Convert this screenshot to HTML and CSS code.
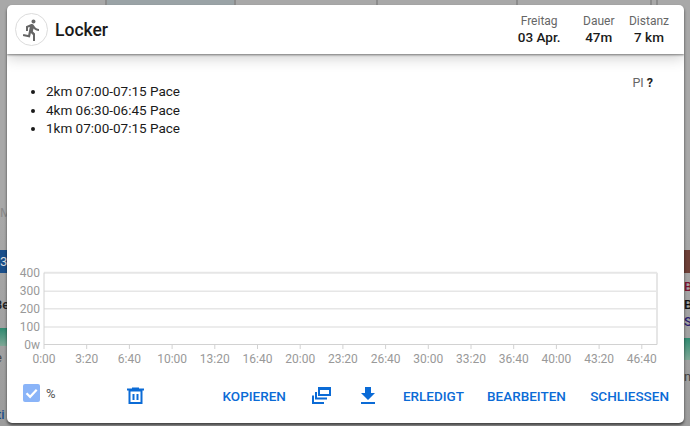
FILE: index.html
```html
<!DOCTYPE html>
<html lang="de">
<head>
<meta charset="utf-8">
<title>Locker</title>
<link rel="stylesheet" href="styles.css">
</head>
<body>
<div class="backdrop">
  <div class="cards">
    <div class="card card-a"></div>
    <div class="card card-b"></div>
    <div class="card card-c"></div>
    <div class="card card-d"></div>
    <div class="card card-e"></div>
    <div class="card card-f"></div>
  </div>
  <div class="sides">
    <div class="strip strip-left">
      <div class="bg-text bg-m">M</div>
      <div class="bg-band bg-blue">3</div>
      <div class="bg-text bg-be">Be</div>
      <div class="bg-band bg-green"></div>
      <div class="bg-text bg-e">e</div>
      <div class="bg-text bg-ti">ti</div>
    </div>
    <div class="strip strip-right">
      <div class="bg-band bg-red"></div>
      <div class="bg-text bg-r1">Be</div>
      <div class="bg-text bg-r2">B</div>
      <div class="bg-text bg-r3">S</div>
      <div class="bg-band bg-green"></div>
      <div class="bg-text bg-r4">n</div>
    </div>
  </div>
</div>
<main class="dialog">
  <header class="head">
    <div class="avatar">
      <svg class="run" viewBox="0 0 24 24"><path d="M13.49 5.48c1.1 0 2-.9 2-2s-.9-2-2-2-2 .9-2 2 .9 2 2 2zm-3.6 13.9l1-4.4 2.1 2v6h2v-7.5l-2.1-2 .6-3c1.3 1.5 3.3 2.5 5.5 2.5v-2c-1.9 0-3.5-1-4.3-2.4l-1-1.6c-.4-.6-1-1-1.7-1-.3 0-.5.1-.8.1l-5.2 2.2v4.7h2v-3.4l1.8-.7-1.6 8.1-4.9-1-.4 2 7 1.4z"/></svg>
    </div>
    <h1 class="title">Locker</h1>
    <div class="stats">
      <div class="stat stat-day"><div class="stat-label">Freitag</div><div class="stat-value">03 Apr.</div></div>
      <div class="stat stat-time"><div class="stat-label">Dauer</div><div class="stat-value">47m</div></div>
      <div class="stat"><div class="stat-label">Distanz</div><div class="stat-value">7 km</div></div>
    </div>
  </header>
  <section class="content">
    <ul class="steps">
      <li>2km 07:00-07:15 Pace</li>
      <li>4km 06:30-06:45 Pace</li>
      <li>1km 07:00-07:15 Pace</li>
    </ul>
    <div class="pi">PI <b>?</b></div>
  </section>
  <svg class="chart" viewBox="0 0 677 105" width="677" height="105">
    <g class="grid">
      <path class="frame" d="M37 7.7H650M650 7.7V79.5"/>
      <path d="M37 26.3H650M37 43.7H650M37 62H650"/>
      <path class="axis" d="M37 7.7V84M37 79.5H650M79.7 79.5V84M122.4 79.5V84M165.1 79.5V84M207.8 79.5V84M250.5 79.5V84M293.2 79.5V84M335.9 79.5V84M378.6 79.5V84M421.3 79.5V84M464 79.5V84M506.7 79.5V84M549.4 79.5V84M592.1 79.5V84M634.8 79.5V84"/>
    </g>
    <g class="ylabels">
      <text x="33" y="12">400</text>
      <text x="33" y="30">300</text>
      <text x="33" y="48">200</text>
      <text x="33" y="66">100</text>
      <text x="33" y="84">0w</text>
    </g>
    <g class="xlabels">
      <text x="37" y="98">0:00</text>
      <text x="79.7" y="98">3:20</text>
      <text x="122.4" y="98">6:40</text>
      <text x="165.1" y="98">10:00</text>
      <text x="207.8" y="98">13:20</text>
      <text x="250.5" y="98">16:40</text>
      <text x="293.2" y="98">20:00</text>
      <text x="335.9" y="98">23:20</text>
      <text x="378.6" y="98">26:40</text>
      <text x="421.3" y="98">30:00</text>
      <text x="464" y="98">33:20</text>
      <text x="506.7" y="98">36:40</text>
      <text x="549.4" y="98">40:00</text>
      <text x="592.1" y="98">43:20</text>
      <text x="634.8" y="98">46:40</text>
    </g>
  </svg>
  <footer class="actions">
    <div class="check">
      <svg viewBox="0 0 17 18" width="17" height="18"><path d="M3.5 9.2l3.6 3.6 6.6-7" /></svg>
    </div>
    <span class="pct">%</span>
    <svg class="icon trash" viewBox="0 0 17 17" width="17" height="17"><path class="ln" d="M2.5 3.500H14.500V16H2.500ZM6.500 7V13M10.500 7V13"/><path class="fl" d="M0 1.500H5V0.500H12V1.500H17V3.500H0Z"/></svg>
    <span class="btn btn-kopieren">Kopieren</span>
    <svg class="icon copy" viewBox="0 0 19 17" width="19" height="17"><path class="ln" d="M7 1.500H18V8H7Z"/><path class="fl" d="M6 0H19V3H6Z"/><path class="ln" d="M4 5V11.500H15M1 8.500V16H12"/></svg>
    <svg class="icon down" viewBox="0 0 14 17" width="14" height="17"><path class="fl" d="M4 0H10V6H14L7 13L0 6H4ZM0 15H14V17H0Z"/></svg>
    <span class="btn btn-erledigt">Erledigt</span>
    <span class="btn btn-bearbeiten">Bearbeiten</span>
    <span class="btn btn-schliessen">Schliessen</span>
  </footer>
</main>
</body>
</html>
```
FILE: styles.css
```css
* { box-sizing: border-box; }
html, body { margin: 0; height: 100%; }
body {
  width: 690px;
  height: 426px;
  overflow: hidden;
  position: relative;
  background: #a6a6a6;
  font-family: Roboto, "Liberation Sans", sans-serif;
}
.backdrop {
  display: flex;
  flex-direction: column;
  height: 426px;
  background: linear-gradient(#a8a8a8, #a8a8a8 50%, #9c9c9c);
}
.cards { display: flex; flex: none; height: 5px; }
.card { flex: none; height: 5px; border-right: 2px solid #8c8c8c; }
.card-a { width: 107px; }
.card-b { width: 129px; background: #9aa3a6; }
.card-c { width: 142px; }
.card-d { width: 140px; }
.card-e { width: 134px; }
.card-f { width: 6px; }
.sides { flex: 1; display: flex; justify-content: space-between; min-height: 0; }
.strip { width: 7px; overflow: hidden; padding-top: 200px; font-size: 13px; line-height: 16px; }
.strip-right { width: 6px; }
.bg-text { font-weight: 500; color: #222; white-space: nowrap; }
.bg-band { color: #ddd; line-height: 23px; }
.bg-blue { height: 23px; margin-top: 29px; background: #1b4f8a; }
.bg-red { height: 23px; margin-top: 45px; background: #6e4038; }
.bg-green { height: 18px; background: linear-gradient(#2f8a70, #7fa796); }
.bg-m { color: #8a8a8a; font-weight: 400; }
.bg-be { margin-top: 24px; margin-left: -6px; }
.strip-left .bg-green { margin-top: 15px; }
.bg-e { margin-top: 4px; margin-left: -5px; color: #444; font-weight: 400; }
.bg-ti { margin-top: 41px; color: #1b4f8a; margin-left: -3px; }
.bg-r1 { margin-top: 6px; color: #7a1530; }
.bg-r2 { margin-top: 2px; color: #111; }
.bg-r3 { margin-top: 1px; color: #2a1a6e; }
.strip-right .bg-green { height: 22px; margin-top: 8px; }
.bg-r4 { margin-top: 9px; color: #444; font-weight: 400; }

.dialog {
  position: absolute;
  left: 7px;
  top: 5px;
  width: 677px;
  height: 418px;
  display: flex;
  flex-direction: column;
  background: #fff;
  border-radius: 5px;
  overflow: hidden;
  box-shadow: 0 2px 3px rgba(0, 0, 0, .6);
}
.head {
  display: flex;
  align-items: center;
  height: 49px;
  flex: none;
  padding: 0 15px 0 8px;
  position: relative;
  box-shadow: 0 1px 2px rgba(0, 0, 0, .45), 0 3px 14px rgba(0, 0, 0, .22);
}
.avatar {
  width: 33px;
  height: 33px;
  border: 1px solid #dcdcdc;
  border-radius: 50%;
  display: flex;
  align-items: center;
  justify-content: center;
}
.run { width: 24px; height: 24px; fill: #666; }
.title {
  margin: 0 0 0 7px;
  font-size: 17.500px;
  font-weight: 500;
  color: #1a1a1a;
}
.stats { margin-left: auto; display: flex; }
.stat { text-align: center; }
.stat-day { margin-right: 22.500px; }
.stat-time { margin-right: 14.500px; }
.stat-label { font-size: 12px; line-height: 16px; color: #666; }
.stat-value { font-size: 13.500px; line-height: 17px; font-weight: 500; color: #1a1a1a; }

.content { flex: 1; display: flex; justify-content: space-between; min-height: 0; }
.steps {
  margin: 28px 0 0;
  padding: 0 0 0 39px;
  font-size: 13.500px;
  line-height: 18.500px;
  color: #1a1a1a;
}
.pi { margin: 21px 31px 0 0; font-size: 12.500px; line-height: 16px; color: #666; }
.pi b { color: #222; font-weight: 700; }

.chart { flex: none; display: block; }
.grid path { fill: none; stroke: #e6e6e6; stroke-width: 1.400; }
.grid .axis { stroke: #d2d2d2; stroke-width: 1; }
.grid .frame { stroke-width: 2; stroke: #e6e6e6; }
.ylabels text { font-size: 12px; fill: #999; text-anchor: end; }
.xlabels text { font-size: 12px; fill: #999; text-anchor: middle; }

.actions {
  flex: none;
  height: 53px;
  display: flex;
  align-items: center;
  padding: 0 15px 2px 16px;
}
.check {
  width: 17px;
  height: 18px;
  background: #8ab4f8;
  border-radius: 2px;
  margin-top: -5px;
}
.check svg { display: block; fill: none; stroke: #fff; stroke-width: 2.200; }
.pct { margin-left: 6px; font-size: 13px; color: #555; margin-top: -4px; }
.icon { flex: none; display: block; }
.ln { fill: none; stroke: #0b6bd6; stroke-width: 2; }
.fl { fill: #0b6bd6; }
.trash { margin-left: 71px; }
.btn {
  font-size: 13.500px;
  font-weight: 500;
  color: #0b6bd6;
  text-transform: uppercase;
  white-space: nowrap;
}
.btn-kopieren { margin-left: 79px; }
.copy { margin-left: 26px; }
.down { margin-left: 30px; }
.btn-erledigt { margin-left: 28px; }
.btn-bearbeiten { margin-left: 23px; }
.btn-schliessen { margin-left: auto; }
```
